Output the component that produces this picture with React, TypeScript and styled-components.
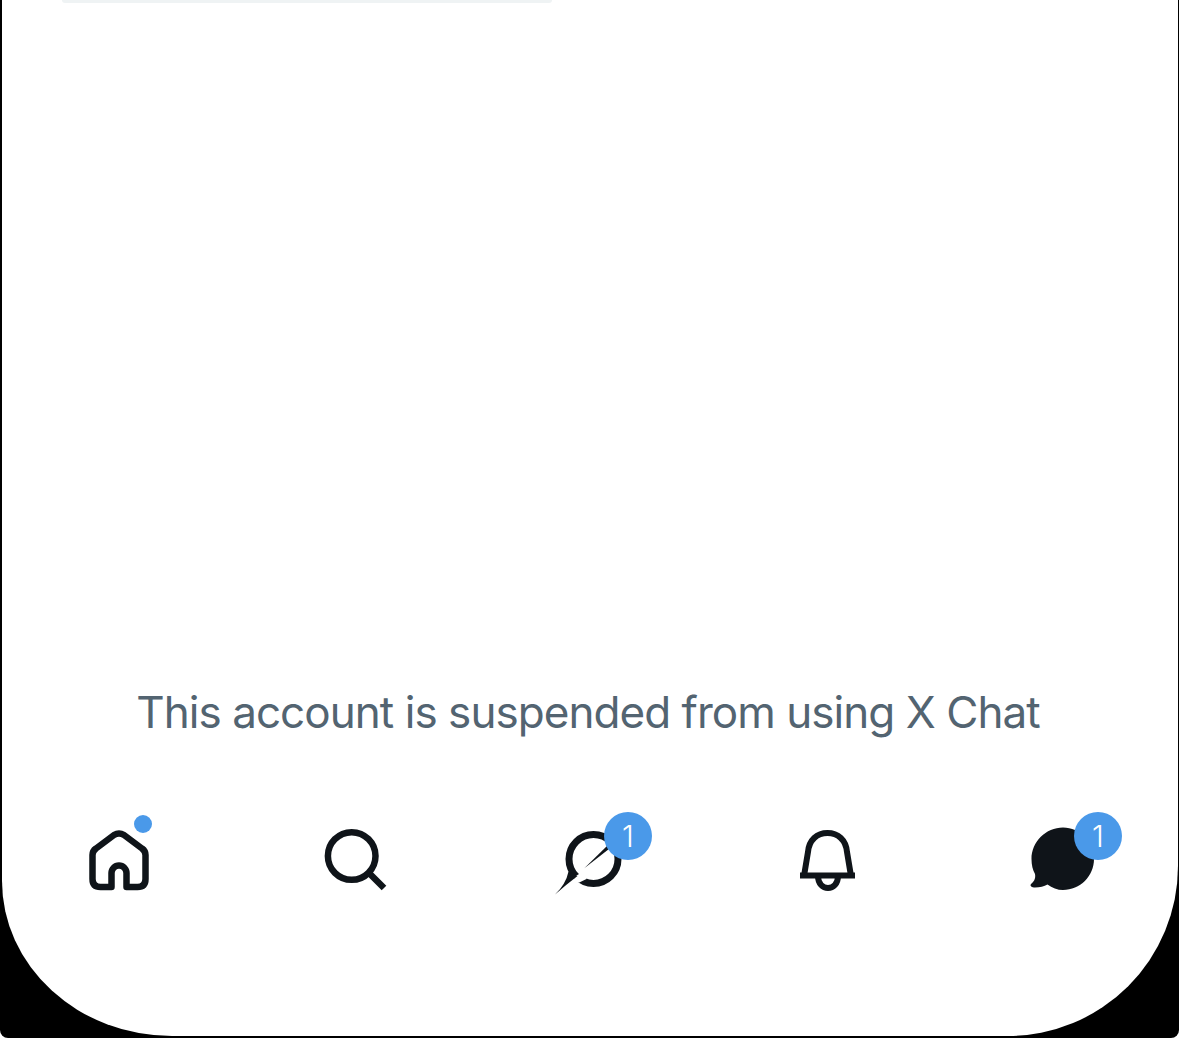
import React from 'react';
import styled, { createGlobalStyle } from 'styled-components';

const ink = '#0f1419';
const blue = '#4a99e9';

const GlobalStyle = createGlobalStyle`
  html, body {
    margin: 0;
    padding: 0;
    background: #fff;
  }
`;

const Frame = styled.div`
  width: 1179px;
  height: 1038px;
  box-sizing: border-box;
  padding: 0 1px 2px 2px;
  background: #000;
  border-radius: 0 0 8px 8px;
  overflow: hidden;
`;

const Screen = styled.main`
  height: 100%;
  display: flex;
  flex-direction: column;
  background: #fff;
  border-radius: 0 0 170px 170px / 0 0 170px 155px;
  font-family: Inter, 'Liberation Sans', sans-serif;
`;

const TopPill = styled.div`
  width: 490px;
  height: 3px;
  flex: none;
  margin-left: 60px;
  background: #eff3f4;
  border-radius: 0 0 14px 14px;
`;

const Notice = styled.p`
  margin: auto 0 0;
  padding-right: 4px;
  text-align: center;
  font-size: 44px;
  line-height: 52px;
  font-weight: 400;
  letter-spacing: -0.95px;
  color: #536471;
`;

const TabBar = styled.nav`
  display: flex;
  justify-content: space-between;
  margin-top: 86px;
  padding: 0 79px 140px 81px;
`;

const Tab = styled.div`
  position: relative;
  width: 72px;
  height: 72px;
`;

const Glyph = styled.svg.attrs({ viewBox: '0 0 72 72' })`
  display: block;
  width: 72px;
  height: 72px;
  overflow: visible;
`;

const Dot = styled.span`
  position: absolute;
  left: 51px;
  top: -9px;
  width: 18px;
  height: 18px;
  border-radius: 50%;
  background: ${blue};
`;

const Badge = styled.span<{ $left: number }>`
  position: absolute;
  left: ${(p) => p.$left}px;
  top: -12px;
  width: 48px;
  height: 48px;
  display: flex;
  align-items: center;
  justify-content: center;
  border-radius: 50%;
  background: ${blue};
  color: #fff;
  font-size: 30px;
  font-weight: 300;
  line-height: 1;
`;

const HomeIcon = () => (
  <Glyph fill="none" stroke={ink} strokeWidth="6.5" strokeLinejoin="round">
    <path d="M9.500 31v24q0 8 8 8h11V49a7.500 7.500 0 0 1 15 0v14h11q8 0 8-8V31q0-4-3.500-6.500L41 11q-5-3-10 0L13 24.500Q9.500 27 9.500 31Z" />
  </Glyph>
);

const SearchIcon = () => (
  <Glyph fill="none" stroke={ink} strokeWidth="6.5">
    <circle cx="32.700" cy="32" r="23.800" />
    <path d="M50 49l15 15" />
  </Glyph>
);

// ring with a needle slashed through it, the pointed tail sticks out bottom left
const ComposeIcon = () => (
  <Glyph>
    <circle cx="38.500" cy="35" r="24.500" fill="none" stroke={ink} strokeWidth="7" />
    <path d="M31 46L21.500 51.500L15 60L24.300 58.500L31.500 55Z" fill="#fff" />
    <path d="M0 70.500Q11 60 13.500 47.500L22.500 52Q12 60 0 70.500Z" fill={ink} />
    <path d="M29.300 44.300L54 20L56.500 23Z" fill={ink} />
  </Glyph>
);

const BellIcon = () => (
  <Glyph fill="none" stroke={ink} strokeWidth="6">
    <path d="M9 51.500H64" />
    <path d="M13 52L17 28C18 16 26 9 36.500 9C47 9 55 16 56 28L60 52" />
    <path d="M27 52C27 68 47 68 47 52" />
  </Glyph>
);

const ChatIcon = () => (
  <Glyph>
    <path
      fill={ink}
      d="M36 3.500C18.900 3.500 4.500 17.900 4.500 35C4.500 41 5.700 46 8 50C9 55 6.500 58 4 60C2.500 62 5 63.500 8 63.500C13 63.500 17 62.500 20.500 60.500C25 64 30.500 66 36 66C53.100 66 67 52.100 67 35C67 17.900 53.100 3.500 36 3.500Z"
    />
  </Glyph>
);

export default function App() {
  return (
    <>
      <GlobalStyle />
      <Frame>
        <Screen>
          <TopPill />
          <Notice>This account is suspended from using X Chat</Notice>
          <TabBar>
            <Tab>
              <HomeIcon />
              <Dot />
            </Tab>
            <Tab>
              <SearchIcon />
            </Tab>
            <Tab>
              <ComposeIcon />
              <Badge $left={49}>1</Badge>
            </Tab>
            <Tab>
              <BellIcon />
            </Tab>
            <Tab>
              <ChatIcon />
              <Badge $left={47}>1</Badge>
            </Tab>
          </TabBar>
        </Screen>
      </Frame>
    </>
  );
}
